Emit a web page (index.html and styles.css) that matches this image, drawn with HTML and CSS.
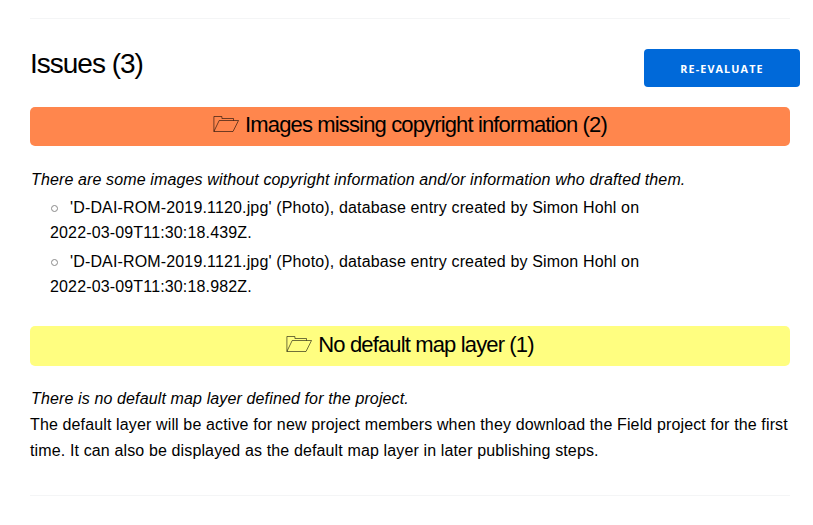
FILE: index.html
```html
<!DOCTYPE html>
<html lang="en">
<head>
<meta charset="utf-8">
<title>Issues</title>
<link rel="stylesheet" href="styles.css">
</head>
<body>
<main class="container">
<hr>
<header class="row">
<h2>Issues (3)</h2>
<button class="button">Re-evaluate</button>
</header>
<section>
<h3 class="banner error"><svg class="folder" viewBox="0 0 26 18"><path d="M.9 16.500V1.500h8v2h11.600v2M.9 16.500l5.300-11h19.300l-5.500 11z"/></svg><span>Images missing copyright information (2)</span></h3>
<div class="details">
<em>There are some images without copyright information and/or information who drafted them.</em>
<ul>
<li>'D-DAI-ROM-2019.1120.jpg' (Photo), database entry created by Simon Hohl on 2022-03-09T11:30:18.439Z.</li>
<li>'D-DAI-ROM-2019.1121.jpg' (Photo), database entry created by Simon Hohl on 2022-03-09T11:30:18.982Z.</li>
</ul>
</div>
</section>
<section>
<h3 class="banner warning"><svg class="folder" viewBox="0 0 26 18"><path d="M.9 16.500V1.500h8v2h11.600v2M.9 16.500l5.300-11h19.300l-5.500 11z"/></svg><span>No default map layer (1)</span></h3>
<div class="details">
<em>There is no default map layer defined for the project.</em>
<p>The default layer will be active for new project members when they download the Field project for the first time. It can also be displayed as the default map layer in later publishing steps.</p>
</div>
</section>
<hr class="end">
</main>
</body>
</html>
```
FILE: styles.css
```css
* { box-sizing: border-box; }
body { margin: 0; background: #fff; color: #000; font: 16px/26px "Nimbus Sans", "Liberation Sans", Arial, sans-serif; letter-spacing: .13px; overflow: hidden; }
.container { width: 760px; margin-left: 30px; padding-top: 18px; }
hr { border: 0; border-top: 1px solid #f4f5f6; margin: 0; }
.row { display: flex; justify-content: space-between; width: 770px; height: 88px; padding-top: 30px; }
h2 { margin: 0; font-size: 28px; line-height: 29px; font-weight: 300; letter-spacing: -1px; }
.button { width: 156px; height: 38px; border: 0; border-radius: 4px; background: #0069d9; color: #fff; font: 700 10.8px/38px "Open Sans", sans-serif; letter-spacing: 1.1px; text-transform: uppercase; padding: 1px 0 0; }
.banner { display: flex; justify-content: center; height: 39px; margin: 0; border-radius: 5px; font-size: 22px; line-height: 36px; font-weight: 300; letter-spacing: -.86px; }
.error { background: #ff864d; }
.warning { height: 40px; background: #fffe80; line-height: 38px; }
.folder { width: 26px; height: 18px; margin: 8px 6px 0 0; fill: none; stroke: #000; stroke-width: .7; stroke-opacity: .8; }
.warning .folder { margin-top: 9px; }
.details { padding-top: 21px; }
.warning + .details { padding-top: 20px; }
em { display: block; padding-left: 1px; }
ul { list-style: none; margin: 2px 0 27px; padding-left: 20px; width: 640px; }
li { line-height: 25px; margin-bottom: 4px; letter-spacing: .15px; }
li::before { content: ""; display: inline-block; width: 7px; height: 7px; margin: 0 12px 1px 1px; border: 1px solid #8a8a8a; border-radius: 50%; box-sizing: border-box; }
p { margin: 0; letter-spacing: .134px; }
.end { margin-top: 31px; }
```
